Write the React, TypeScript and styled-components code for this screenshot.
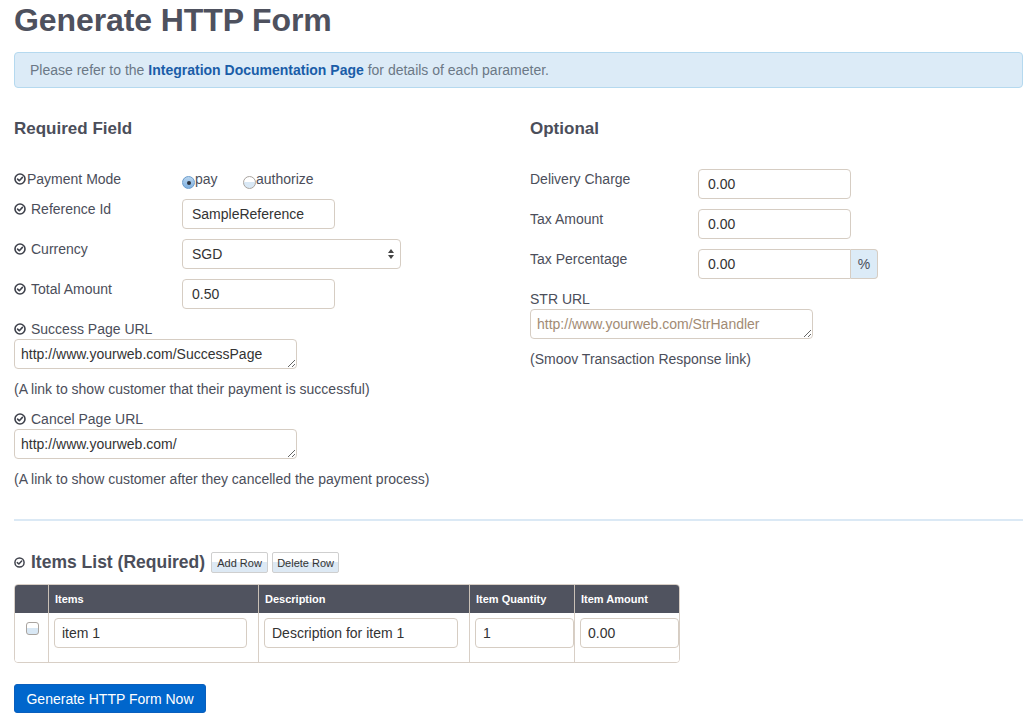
import React from "react";
import styled, { createGlobalStyle } from "styled-components";

const Global = createGlobalStyle`
  html, body { margin: 0; padding: 0; background: #fff; }
  body { font-family: "Liberation Sans", Arial, sans-serif; color: #4b4e5a; }
  * { box-sizing: border-box; }
`;

const Page = styled.div`
  padding: 3px 12px 0 14px;
`;

const Title = styled.h1`
  margin: 0;
  font-size: 32px;
  line-height: 35px;
  font-weight: 700;
  color: #4e515e;
  letter-spacing: -0.1px;
`;

const Alert = styled.div`
  margin-top: 14px;
  background: #dcebf7;
  border: 1px solid #b5d9ef;
  border-radius: 4px;
  padding: 7px 15px;
  font-size: 14px;
  line-height: 20px;
  color: #6b7886;
`;

const DocLink = styled.a`
  color: #1a5da8;
  font-weight: 700;
  text-decoration: none;
`;

const Columns = styled.div`
  display: grid;
  grid-template-columns: 516px 1fr;
  margin-top: 30px;
`;

const Column = styled.div`
  display: flex;
  flex-direction: column;
`;

const SectionHeading = styled.h3`
  margin: 1px 0 30px;
  font-size: 17px;
  line-height: 20px;
  font-weight: 700;
  color: #4b4e5a;
`;

const Row = styled.div<{ $tight?: boolean; $height?: number }>`
  display: flex;
  align-items: flex-start;
  margin-bottom: ${(p) => (p.$tight ? 0 : 10)}px;
  height: ${(p) => p.$height ?? 30}px;
`;

const Label = styled.div<{ $gap?: number }>`
  width: 168px;
  flex: none;
  display: flex;
  align-items: center;
  gap: ${(p) => p.$gap ?? 5}px;
  font-size: 14px;
  line-height: 20px;
  color: #4b4e5a;
`;

const StackLabel = styled(Label)`
  width: auto;
`;

const Help = styled.div`
  margin: 10px 0 10px;
  font-size: 14px;
  line-height: 20px;
  color: #4b4e5a;
`;

const Input = styled.input<{ $w: number }>`
  width: ${(p) => p.$w}px;
  height: 30px;
  border: 1px solid #d6cdc3;
  border-radius: 4px;
  padding: 0 9px;
  font-family: "Liberation Sans", Arial, sans-serif;
  font-size: 14px;
  color: #333;
  background: #fff;
  outline: none;
`;

const AddonGroup = styled.div`
  display: flex;
`;

const AddonInput = styled(Input)`
  border-radius: 4px 0 0 4px;
`;

const Addon = styled.span`
  width: 27px;
  height: 30px;
  display: flex;
  align-items: center;
  justify-content: center;
  background: #dcebf7;
  border: 1px solid #d6cdc3;
  border-left: none;
  border-radius: 0 4px 4px 0;
  font-size: 14px;
  color: #4b4e5a;
`;

const TextArea = styled.textarea`
  width: 283px;
  height: 30px;
  border: 1px solid #d6cdc3;
  border-radius: 4px;
  padding: 5px 6px;
  font-family: "Liberation Sans", Arial, sans-serif;
  font-size: 14px;
  line-height: 18px;
  color: #333;
  resize: both;
  overflow: hidden;
  display: block;
  outline: none;
  &::placeholder { color: #a28b74; }
`;

const SelectWrap = styled.div`
  position: relative;
  width: 219px;
  height: 30px;
`;

const Select = styled.select`
  appearance: none;
  -webkit-appearance: none;
  width: 100%;
  height: 30px;
  border: 1px solid #d6cdc3;
  border-radius: 4px;
  padding: 0 9px;
  font-family: "Liberation Sans", Arial, sans-serif;
  font-size: 14px;
  color: #333;
  background: #fff;
  outline: none;
`;

const SelectArrows = styled.svg`
  position: absolute;
  right: 6px;
  top: 9px;
  pointer-events: none;
`;

const RadioGroup = styled.div`
  display: flex;
  align-items: flex-start;
  font-size: 14px;
  line-height: 20px;
`;

const RadioOption = styled.label<{ $w?: number }>`
  display: flex;
  align-items: flex-start;
  width: ${(p) => (p.$w ? `${p.$w}px` : "auto")};
`;

const RadioDot = styled.span<{ $checked?: boolean }>`
  width: 13px;
  height: 13px;
  margin-top: 7px;
  border-radius: 50%;
  flex: none;
  position: relative;
  border: 1px solid ${(p) => (p.$checked ? "#6b9ccb" : "#a9a49f")};
  background: ${(p) =>
    p.$checked
      ? "linear-gradient(#b9d6f0, #7fb0e0)"
      : "linear-gradient(#fff 45%, #d9e8f5 45%)"};
  &::after {
    content: "";
    display: ${(p) => (p.$checked ? "block" : "none")};
    position: absolute;
    left: 3.5px;
    top: 3.5px;
    width: 4px;
    height: 4px;
    border-radius: 50%;
    background: #2d3440;
  }
`;

const Divider = styled.hr`
  border: none;
  border-top: 2px solid #dbe9f5;
  margin: 20px 0 0;
`;

const ItemsHeader = styled.div`
  margin-top: 31px;
  height: 21px;
  display: flex;
  align-items: center;
  gap: 4px;
`;

const ItemsTitle = styled.h3`
  margin: 0 2px 0 0;
  display: flex;
  align-items: center;
  gap: 6px;
  font-size: 17.5px;
  line-height: 21px;
  font-weight: 700;
  color: #4b4e5a;
`;

const SmallButton = styled.button<{ $w: number }>`
  width: ${(p) => p.$w}px;
  height: 21px;
  padding: 0;
  border: 1px solid #cfcfcf;
  border-radius: 2px;
  background: linear-gradient(#fff 50%, #dde9f4 50%);
  font-family: "Liberation Sans", Arial, sans-serif;
  font-size: 11px;
  color: #333;
`;

const Table = styled.div`
  margin-top: 11px;
  width: 666px;
  border: 1px solid #d8cfc6;
  border-radius: 4px;
  overflow: hidden;
`;

const TableRow = styled.div<{ $head?: boolean }>`
  display: grid;
  grid-template-columns: 33px 210px 211px 105px 1fr;
  height: ${(p) => (p.$head ? 28 : 49)}px;
  background: ${(p) => (p.$head ? "#50535f" : "#fff")};
`;

const HeadCell = styled.div<{ $first?: boolean }>`
  border-left: ${(p) => (p.$first ? "none" : "1px solid #c9c0b6")};
  padding: 0 6px;
  display: flex;
  align-items: center;
  font-size: 11px;
  font-weight: 700;
  color: #fff;
`;

const BodyCell = styled.div<{ $first?: boolean }>`
  border-left: ${(p) => (p.$first ? "none" : "1px solid #d8cfc6")};
  padding: 5px 5px 0;
  display: flex;
  align-items: flex-start;
  justify-content: ${(p) => (p.$first ? "center" : "flex-start")};
`;

const CheckBox = styled.span`
  width: 13px;
  height: 13px;
  margin-top: 4px;
  margin-left: 2px;
  border: 1px solid #a9a49f;
  border-radius: 3px;
  background: linear-gradient(#fff 45%, #d9e8f5 45%);
`;

const CellInput = styled(Input)`
  padding: 0 7px;
`;

const PrimaryButton = styled.button`
  margin-top: 21px;
  width: 192px;
  height: 29px;
  border: 1px solid #0a5fbd;
  border-radius: 3px;
  background: #0066cc;
  color: #fff;
  font-family: "Liberation Sans", Arial, sans-serif;
  font-size: 14px;
  padding: 0;
`;

const CheckIcon = ({ size = 12 }: { size?: number }) => (
  <svg width={size} height={size} viewBox="0 0 12 12" style={{ flex: "none" }}>
    <circle cx="6" cy="6" r="5" fill="none" stroke="#3e414b" strokeWidth="1.6" />
    <path d="M3.6 6.1 L5.3 7.7 L8.4 4.4" fill="none" stroke="#3e414b" strokeWidth="1.6" strokeLinecap="round" strokeLinejoin="round" />
  </svg>
);

export default function App() {
  return (
    <>
      <Global />
      <Page>
        <Title>Generate HTTP Form</Title>
        <Alert>
          Please refer to the <DocLink href="#">Integration Documentation Page</DocLink> for details of each parameter.
        </Alert>
        <Columns>
          <Column>
            <SectionHeading>Required Field</SectionHeading>
            <Row $tight>
              <Label $gap={1}>
                <CheckIcon />
                Payment Mode
              </Label>
              <RadioGroup>
                <RadioOption $w={61}>
                  <RadioDot $checked />
                  pay
                </RadioOption>
                <RadioOption>
                  <RadioDot />
                  authorize
                </RadioOption>
              </RadioGroup>
            </Row>
            <Row>
              <Label>
                <CheckIcon />
                Reference Id
              </Label>
              <Input $w={153} defaultValue="SampleReference" />
            </Row>
            <Row>
              <Label>
                <CheckIcon />
                Currency
              </Label>
              <SelectWrap>
                <Select defaultValue="SGD">
                  <option value="SGD">SGD</option>
                </Select>
                <SelectArrows width="8" height="12" viewBox="0 0 8 12">
                  <path d="M4 1 L7 5 L1 5 Z" fill="#444" />
                  <path d="M4 11 L7 7 L1 7 Z" fill="#444" />
                </SelectArrows>
              </SelectWrap>
            </Row>
            <Row>
              <Label>
                <CheckIcon />
                Total Amount
              </Label>
              <Input $w={153} defaultValue="0.50" />
            </Row>
            <StackLabel>
              <CheckIcon />
              Success Page URL
            </StackLabel>
            <TextArea defaultValue="http://www.yourweb.com/SuccessPage" />
            <Help>(A link to show customer that their payment is successful)</Help>
            <StackLabel>
              <CheckIcon />
              Cancel Page URL
            </StackLabel>
            <TextArea defaultValue="http://www.yourweb.com/" />
            <Help>(A link to show customer after they cancelled the payment process)</Help>
          </Column>
          <Column>
            <SectionHeading>Optional</SectionHeading>
            <Row>
              <Label>Delivery Charge</Label>
              <Input $w={153} defaultValue="0.00" />
            </Row>
            <Row>
              <Label>Tax Amount</Label>
              <Input $w={153} defaultValue="0.00" />
            </Row>
            <Row>
              <Label>Tax Percentage</Label>
              <AddonGroup>
                <AddonInput $w={153} defaultValue="0.00" />
                <Addon>%</Addon>
              </AddonGroup>
            </Row>
            <StackLabel>STR URL</StackLabel>
            <TextArea placeholder="http://www.yourweb.com/StrHandler" />
            <Help>(Smoov Transaction Response link)</Help>
          </Column>
        </Columns>
        <Divider />
        <ItemsHeader>
          <ItemsTitle>
            <CheckIcon size={11} />
            Items List (Required)
          </ItemsTitle>
          <SmallButton $w={57}>Add Row</SmallButton>
          <SmallButton $w={67}>Delete Row</SmallButton>
        </ItemsHeader>
        <Table>
          <TableRow $head>
            <HeadCell $first />
            <HeadCell>Items</HeadCell>
            <HeadCell>Description</HeadCell>
            <HeadCell>Item Quantity</HeadCell>
            <HeadCell>Item Amount</HeadCell>
          </TableRow>
          <TableRow>
            <BodyCell $first>
              <CheckBox />
            </BodyCell>
            <BodyCell>
              <CellInput $w={193} defaultValue="item 1" />
            </BodyCell>
            <BodyCell>
              <CellInput $w={194} defaultValue="Description for item 1" />
            </BodyCell>
            <BodyCell>
              <CellInput $w={99} defaultValue="1" />
            </BodyCell>
            <BodyCell>
              <CellInput $w={99} defaultValue="0.00" />
            </BodyCell>
          </TableRow>
        </Table>
        <PrimaryButton>Generate HTTP Form Now</PrimaryButton>
      </Page>
    </>
  );
}
